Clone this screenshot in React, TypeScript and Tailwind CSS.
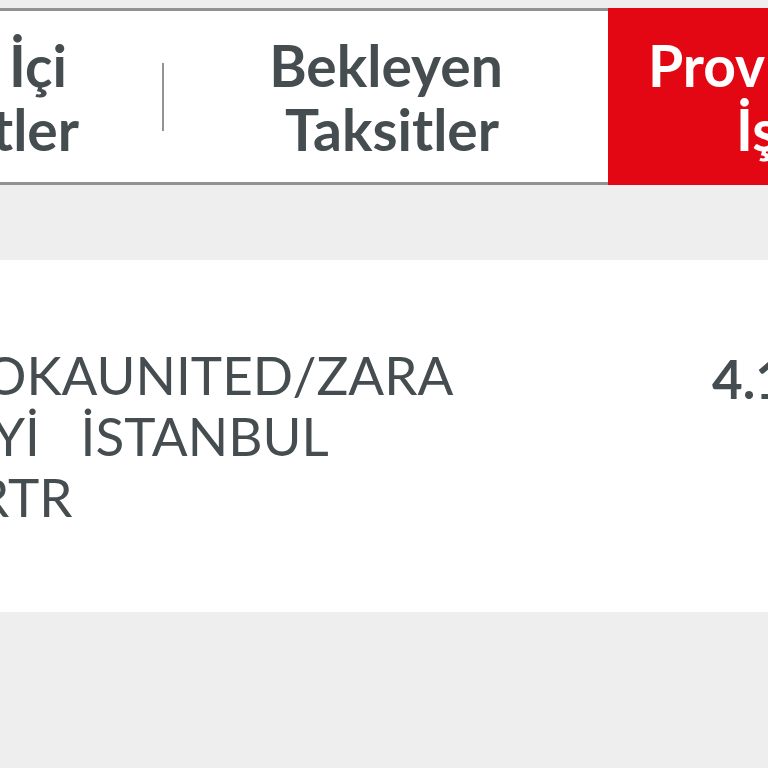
import type { ReactNode } from 'react';

type TabProps = {
  children: ReactNode;
  className: string;
  active?: boolean;
};

function Tab({ children, className, active = false }: TabProps) {
  return (
    <button
      type="button"
      role="tab"
      aria-selected={active}
      className={`overflow-hidden whitespace-pre text-[57px] leading-[64px] font-bold ${className} ${
        active ? 'bg-[#e30613] text-white' : 'border-y-3 border-[#929292] bg-white text-[#464d50]'
      }`}
    >
      {children}
    </button>
  );
}

export default function App() {
  return (
    <main className="min-h-screen overflow-hidden bg-[#eeeeee] pt-2 font-['Lato',sans-serif] text-[#464d50]">
      <div role="tablist" className="flex h-[177px]">
        <Tab className="flex w-41 shrink-0 items-center justify-between">
          <span className="-ml-2 text-right">
            <span className="block pr-3">İçi</span>
            <span className="block">tler</span>
          </span>
          <span className="h-17 w-[2px] bg-[#929292]" />
        </Tab>
        <Tab className="min-w-0 flex-1 text-center">{'Bekleyen\n Taksitler'}</Tab>
        <Tab active className="w-40 shrink-0 pl-10 text-left">
          <span className="block">Provi</span>
          <span className="block pl-22">İş</span>
        </Tab>
      </div>

      <section className="mt-[75px] flex justify-between overflow-hidden bg-white pt-[84px] pb-[85px]">
        <p className="whitespace-pre text-[53px] leading-[61px]">
          <span className="-ml-4 block">OKAUNITED/ZARA</span>
          <span className="-ml-2 block">{'Yİ   İSTANBUL'}</span>
          <span className="-ml-6 block">RTR</span>
        </p>
        <p className="w-14 shrink-0 pt-1 text-[53px] leading-[61px] font-bold">4.1</p>
      </section>
    </main>
  );
}
